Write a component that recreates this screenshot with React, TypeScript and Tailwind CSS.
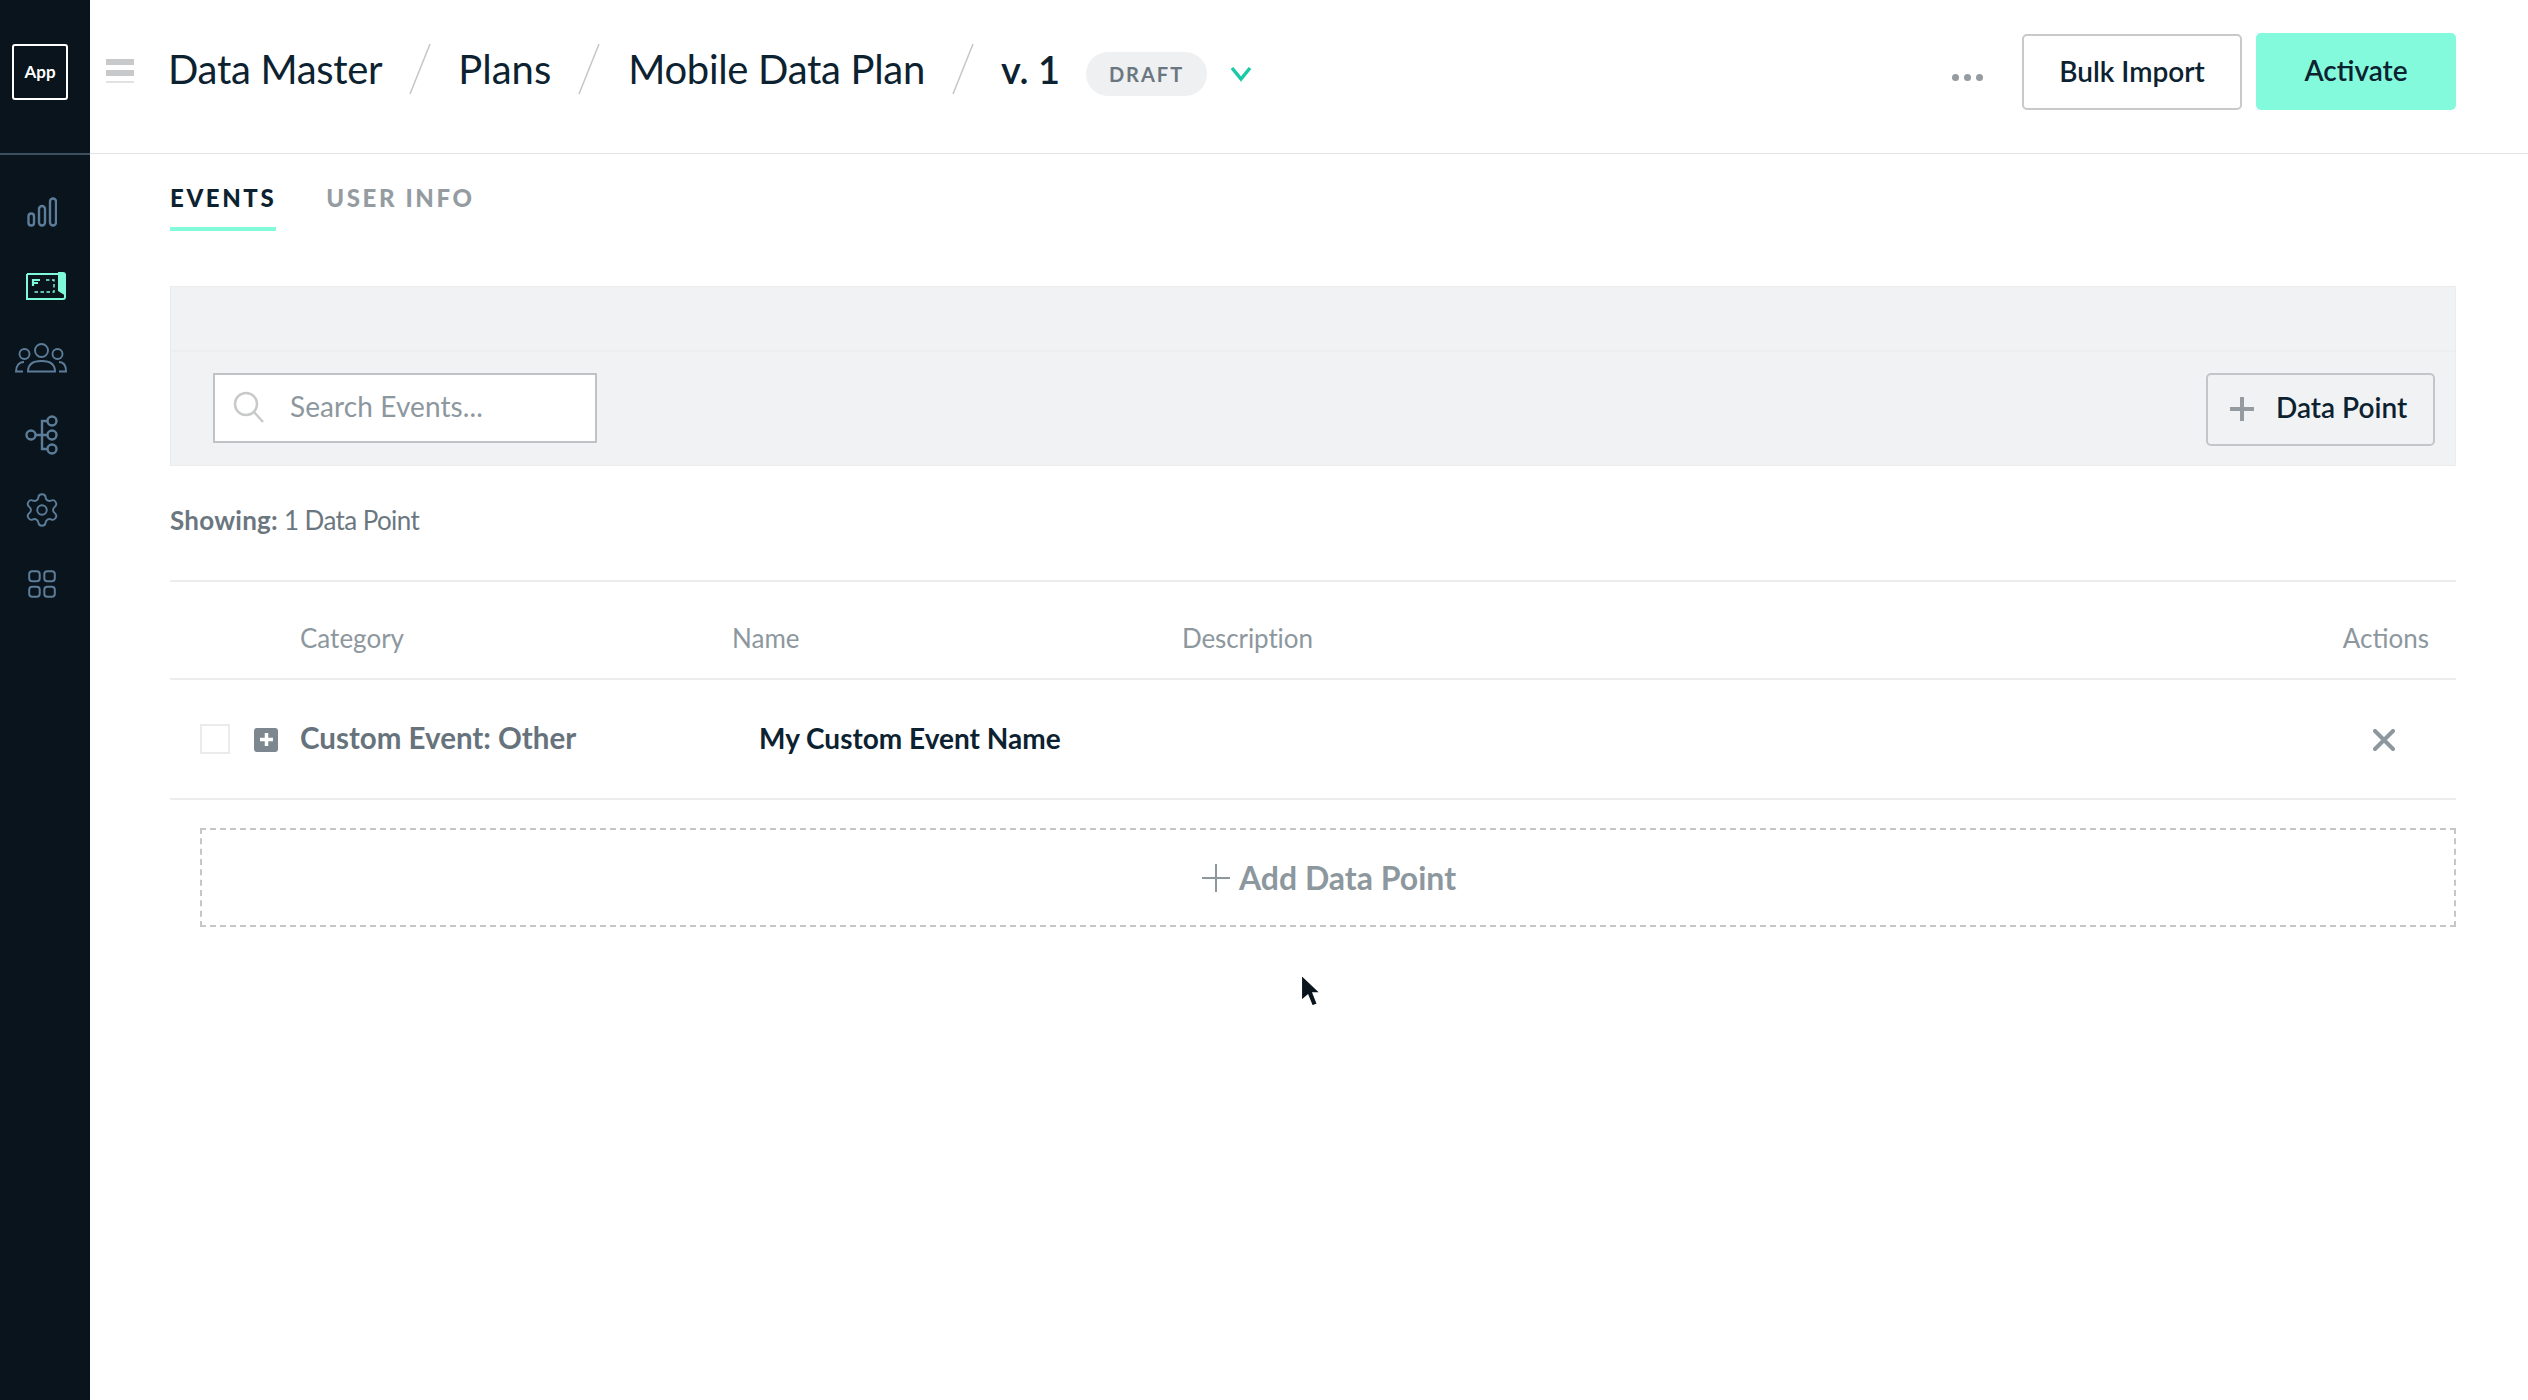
import { Settings } from "lucide-react";

const ICON = "#5c7d99";

function Sep() {
  return (
    <svg width="22" height="52" viewBox="0 0 22 52" className="shrink-0">
      <path d="M21 1 L1 51" stroke="#c4c6c8" strokeWidth="1.5" fill="none" />
    </svg>
  );
}

function SidebarIcons() {
  return (
    <div className="flex flex-col items-start">
      <svg width="30" height="30" viewBox="0 0 30 30" fill="none" stroke={ICON} strokeWidth="2.400" className="mt-[42px] ml-[27px]">
        <rect x="1.500" y="16.500" width="5.500" height="12" rx="2.700" />
        <rect x="12" y="9" width="6" height="19.500" rx="3" />
        <rect x="23" y="1.500" width="6" height="27" rx="3" />
      </svg>
      <svg width="40" height="28" viewBox="0 0 40 28" fill="none" className="mt-[45px] ml-[26px]">
        <path d="M1 2 H32 M1 2 V27 H37 Q39 27 39 25 V20" stroke="#7ffad9" strokeWidth="2" />
        <path d="M32 0 H37 Q40 0 40 3 V24 L32 19 Z" fill="#7ffad9" />
        <path d="M7 14 V8 H14 M7 11 H12" stroke="#7ffad9" strokeWidth="2.200" />
        <path d="M20 8 H28 V20 H7" stroke="#7ffad9" strokeWidth="1.400" strokeDasharray="3.500 2.500" />
      </svg>
      <svg width="52" height="30" viewBox="0 0 52 30" fill="none" stroke={ICON} strokeWidth="1.900" className="mt-[43px] ml-[15px]">
        <circle cx="26.500" cy="7.500" r="6.500" />
        <circle cx="9.500" cy="11" r="5" />
        <circle cx="42.500" cy="11" r="5" />
        <path d="M13 28.500 C13 21 19 18 26.500 18 C34 18 40 21 40 28.500 Z" />
        <path d="M9 19 C4 19 1 23 1 28.500 H8" />
        <path d="M44 19 C49 19 51 23 51 28.500 H44" />
      </svg>
      <svg width="33" height="40" viewBox="0 0 33 40" fill="none" stroke={ICON} strokeWidth="2.400" className="mt-[42px] ml-[25px]">
        <circle cx="6" cy="20" r="4.500" />
        <circle cx="27" cy="6" r="4.500" />
        <circle cx="27" cy="20" r="4.500" />
        <circle cx="27" cy="34" r="4.500" />
        <path d="M10.500 20 H22.500 M17 20 V6 H22.500 M17 20 V34 H22.500" />
      </svg>
      <Settings size={38} color={ICON} strokeWidth={1.200} className="mt-[36px] ml-[23px]" />
      <svg width="28" height="28" viewBox="0 0 28 28" fill="none" stroke={ICON} strokeWidth="2" className="mt-[41px] ml-[28px]">
        <rect x="1.200" y="1.200" width="10.500" height="10" rx="3" />
        <rect x="16.300" y="1.200" width="10.500" height="10" rx="3" />
        <rect x="1.200" y="16.800" width="10.500" height="10" rx="3" />
        <rect x="16.300" y="16.800" width="10.500" height="10" rx="3" />
      </svg>
    </div>
  );
}

export default function App() {
  return (
    <div className="flex h-[1400px] w-[2528px] overflow-hidden bg-white font-['Lato','Liberation_Sans',sans-serif] text-[#0c2230]">
      <aside className="flex w-[90px] shrink-0 flex-col bg-[#0a141c]">
        <div className="flex h-[155px] shrink-0 items-start border-b-2 border-[#3d5060] pl-[12px] pt-[44px]">
          <div className="flex h-[56px] w-[56px] items-center justify-center rounded-[3px] border-2 border-white text-[17px] font-bold text-white">App</div>
        </div>
        <SidebarIcons />
      </aside>

      <main className="relative flex min-w-0 flex-1 flex-col">
        <header className="flex h-[154px] shrink-0 items-start border-b border-[#e3e4e5] pl-[16px] pr-[72px]">
          <div className="mt-[59px] mr-[34px] flex w-[28px] flex-col gap-[5px]">
            <div className="h-[6px] bg-[#c8c9ca]" />
            <div className="h-[6px] bg-[#c8c9ca]" />
            <div className="h-[2px] bg-[#e2e2e2]" />
          </div>
          <div className="mt-[43px] flex items-center gap-[27px] text-[40px] leading-[52px] tracking-[-0.3px]">
            <span>Data Master</span>
            <Sep />
            <span className="tracking-[0px]">Plans</span>
            <Sep />
            <span className="ml-[1px]">Mobile Data Plan</span>
            <Sep />
            <span className="text-[38px] font-semibold tracking-normal">v. 1</span>
          </div>
          <div className="mt-[52px] ml-[26px] flex h-[44px] w-[121px] items-center justify-center rounded-full bg-[#eff0f2] text-[20px] font-bold tracking-[2px] text-[#6b7780]">DRAFT</div>
          <svg width="24" height="16" viewBox="0 0 24 16" fill="none" className="mt-[66px] ml-[23px]">
            <path d="M2 2 L11 13 L20 2" stroke="#1cc9a5" strokeWidth="3.500" />
          </svg>
          <div className="ml-auto mt-[74px] flex gap-[5px]">
            <div className="h-[7px] w-[7px] rounded-full bg-[#949ca2]" />
            <div className="h-[7px] w-[7px] rounded-full bg-[#949ca2]" />
            <div className="h-[7px] w-[7px] rounded-full bg-[#949ca2]" />
          </div>
          <button className="ml-[39px] mt-[34px] flex h-[76px] w-[220px] items-center justify-center rounded-[5px] border-2 border-[#c8c9ca] bg-white pb-[3px] text-[28px] font-semibold">Bulk Import</button>
          <button className="ml-[14px] mt-[33px] flex h-[77px] w-[200px] items-center justify-center rounded-[5px] bg-[#82fadb] pb-[3px] text-[28px] font-semibold">Activate</button>
        </header>

        <div className="flex flex-col pl-[80px] pr-[72px]">
          <nav className="flex h-[77px] items-start gap-[50px]">
            <div className="flex h-[77px] flex-col justify-end border-b-[4px] border-[#82fadb] pb-[14px] text-[24px] leading-[30px] font-black tracking-[2.600px]">EVENTS</div>
            <div className="flex h-[77px] flex-col justify-end pb-[18px] text-[24px] leading-[30px] font-black tracking-[2.600px] text-[#949ca2]">USER INFO</div>
          </nav>

          <section className="mt-[55px] h-[180px] border border-[#eaebec] bg-[#f1f2f4]">
            <div className="h-[65px] border-b-2 border-[#edeeef]" />
            <div className="flex items-start justify-between pl-[42px] pr-[20px] pt-[21px]">
              <div className="flex h-[70px] w-[384px] items-center border-2 border-[#bfc3c6] bg-white pb-[4px] pl-[18px]">
                <svg width="32" height="34" viewBox="0 0 32 34" fill="none" stroke="#c8c9ca" strokeWidth="2.500" className="mr-[25px] mt-[3px]">
                  <circle cx="13" cy="13" r="11" />
                  <path d="M21 21 L30 31" />
                </svg>
                <span className="text-[28px] tracking-[0.1px] text-[#8d979e]">Search Events...</span>
              </div>
              <button className="flex h-[73px] w-[229px] items-center rounded-[5px] border-2 border-[#c3c6c9] pb-[5px] pl-[22px] text-[28px] font-semibold">
                <svg width="24" height="24" viewBox="0 0 24 24" stroke="#949ca2" strokeWidth="4" className="mr-[22px] mt-[4px]">
                  <path d="M12 0 V24 M0 12 H24" />
                </svg>
                Data Point
              </button>
            </div>
          </section>

          <p className="mt-[37px] flex gap-[6px] text-[26px] leading-[34px] text-[#6b7780]">
            <b className="font-bold tracking-[0.25px]">Showing:</b>
            <span className="tracking-[-0.6px]">1 Data Point</span>
          </p>

          <div className="mt-[43px] flex h-[100px] items-center border-y-2 border-[#ecedee] pt-[16px] text-[26px] text-[#8d979e]">
            <span className="ml-[130px] w-[432px]">Category</span>
            <span className="w-[450px]">Name</span>
            <span className="tracking-[-0.1px]">Description</span>
            <span className="ml-auto mr-[27px]">Actions</span>
          </div>

          <div className="flex h-[120px] items-center border-b-2 border-[#ecedee]">
            <div className="ml-[30px] h-[30px] w-[30px] border-2 border-[#ebebeb]" />
            <div className="ml-[24px] mt-[1px] flex h-[24px] w-[24px] items-center justify-center rounded-[3px] bg-[#7c8790]">
              <svg width="13" height="13" viewBox="0 0 13 13" stroke="white" strokeWidth="3.500"><path d="M6.500 0 V13 M0 6.500 H13" /></svg>
            </div>
            <span className="ml-[22px] mb-[2px] w-[459px] text-[29.500px] font-bold text-[#67737c]">Custom Event: Other</span>
            <span className="mb-[2px] text-[28px] font-bold">My Custom Event Name</span>
            <svg width="22" height="22" viewBox="0 0 22 22" stroke="#8d979e" strokeWidth="4" strokeLinecap="round" className="ml-auto mr-[61px] mt-[1px]">
              <path d="M2 2 L20 20 M20 2 L2 20" />
            </svg>
          </div>

          <button className="mt-[28px] ml-[30px] flex h-[99px] items-center justify-center gap-[9px] border-2 border-dashed border-[#c4c6c8] pl-[2px] text-[32px] font-bold text-[#8d979e]">
            <svg width="28" height="28" viewBox="0 0 28 28" stroke="#8d979e" strokeWidth="2"><path d="M14 0 V28 M0 14 H28" /></svg>
            Add Data Point
          </button>
        </div>

        <svg width="26" height="38" viewBox="0 0 24 34" className="absolute left-[1208px] top-[972px]">
          <path d="M3 2 L3 26 L9 21 L13 31 L18 29 L14 19 L21 19 Z" fill="#0a141c" stroke="white" strokeWidth="1.500" />
        </svg>
      </main>
    </div>
  );
}
